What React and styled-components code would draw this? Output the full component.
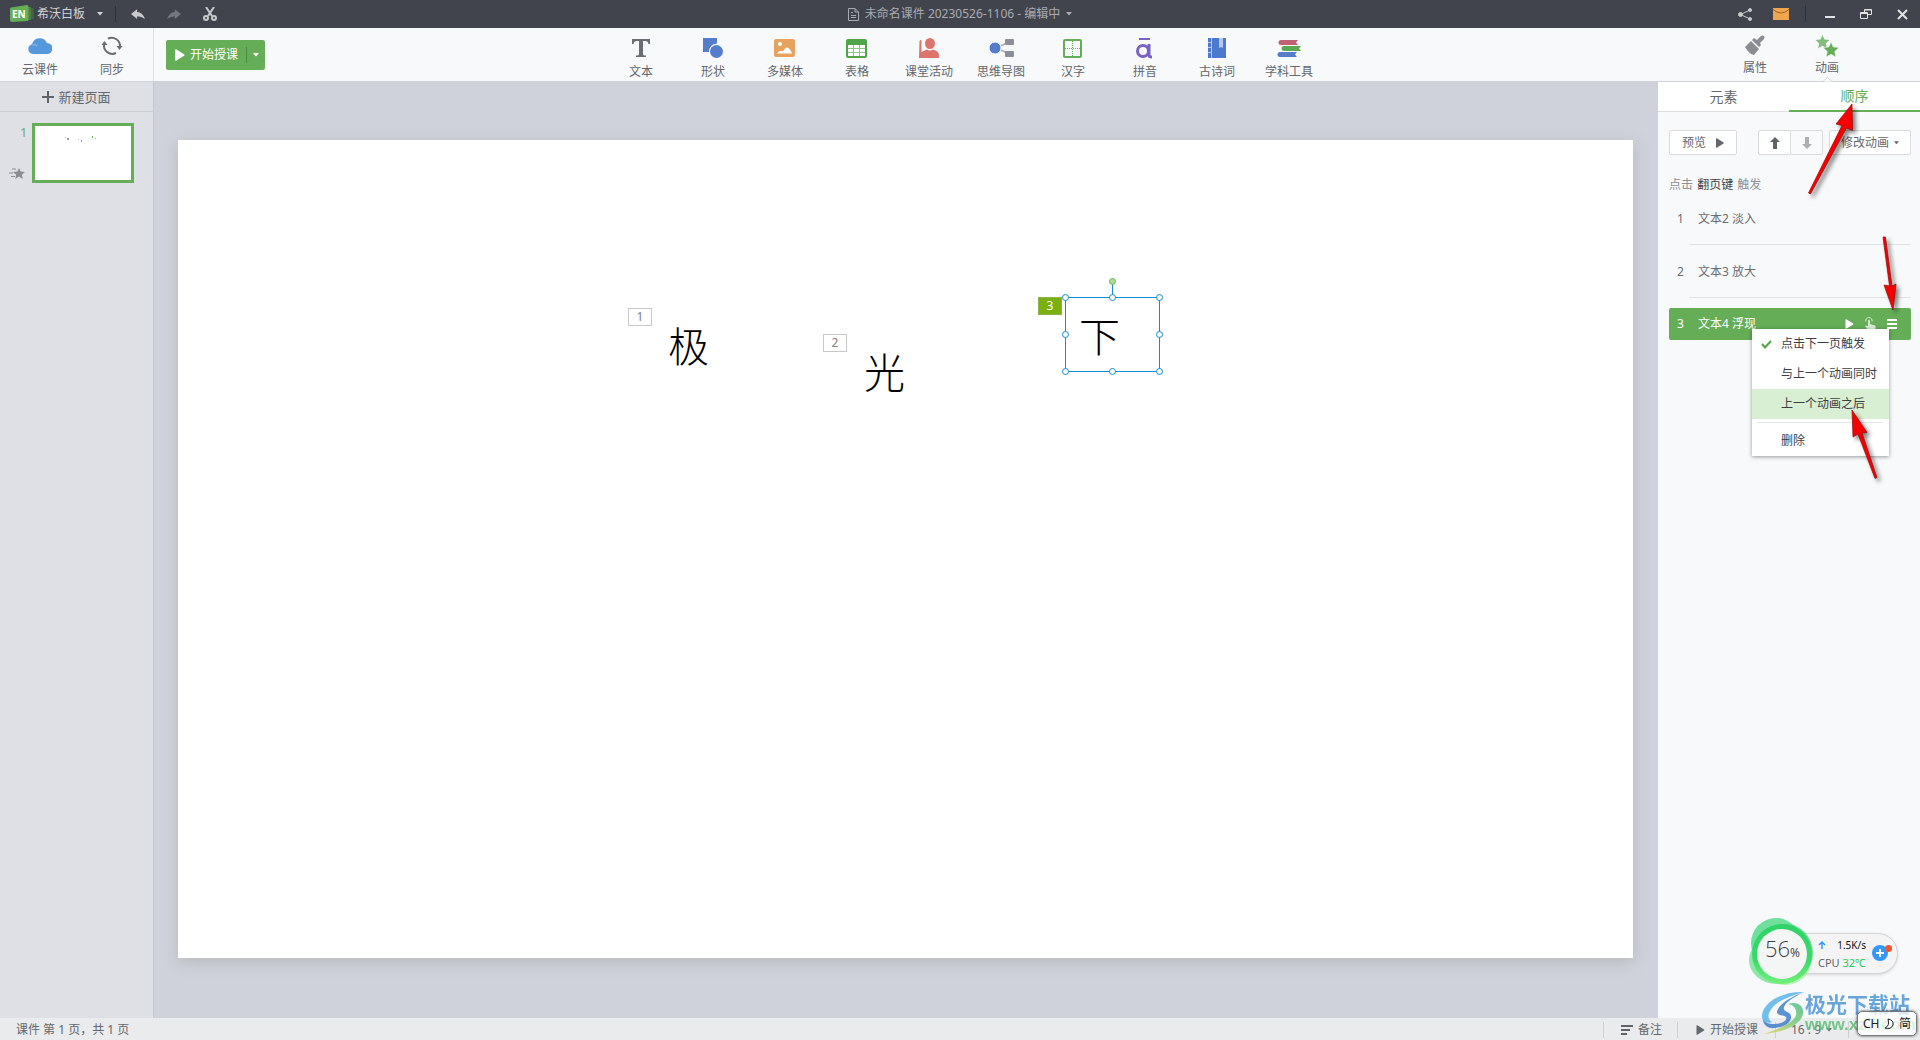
import React from 'react'
import styled, { createGlobalStyle } from 'styled-components';

const GlobalStyle = createGlobalStyle`
  * {
    box-sizing: border-box;
  }
  body {
    margin: 0;
    font-family: "Noto Sans", "Noto Sans CJK SC", sans-serif;
    font-size: 12px;
    line-height: 16px;
    color: #64676b;
  }
  button {
    margin: 0;
    padding: 0;
    border: 0;
    background: none;
    font: inherit;
    color: inherit;
    cursor: pointer;
  }
  svg {
    display: block;
    flex: none;
  }
`;

const Window = styled.div`
  position: relative;
  display: flex;
  flex-direction: column;
  height: 100vh;
  overflow: hidden;
  background: #cfd2db;
`;

//Title bar
const TitleBar = styled.header`
  display: grid;
  grid-template-columns: 1fr auto 1fr;
  align-items: center;
  height: 28px;
  background: #41444d;
  color: #d3d5d9;
`;

const TitleSide = styled.div`
  display: flex;
  align-items: center;
  justify-content: ${props => (props.$end ? 'flex-end' : 'flex-start')};
  padding-left: 10px;
`;

const Brand = styled.button`
  display: flex;
  align-items: center;
  gap: 3px;

  & svg:last-child {
    margin-left: 9px;
  }
`;

const TitleButton = styled.button`
  display: flex;
  align-items: center;
  justify-content: center;
  width: 36px;
  height: 28px;
`;

const DocTitle = styled.button`
  display: flex;
  align-items: center;
  gap: 6px;
  color: #a9abb1;
`;

const TitleRule = styled.span`
  width: 1px;
  height: 16px;
  margin: 0 ${props => props.$after || '6px'} 0 ${props => props.$before || '6px'};
  background: #2e3037;
`;

//Tool bar
const ToolBar = styled.div`
  display: grid;
  grid-template-columns: 1fr auto 1fr;
  height: 54px;
  background: #f7f9fb;
  border-bottom: 1px solid #cfd2d8;
`;

const ToolGroup = styled.div`
  display: flex;
  padding: ${props => props.$pad || '0'};
  justify-content: ${props => (props.$end ? 'flex-end' : 'flex-start')};
`;

const CloudGroup = styled.div`
  display: flex;
  width: 154px;
  padding-left: 4px;
  border-right: 1px solid #dddfe4;
`;

const Tool = styled.button`
  position: relative;
  display: flex;
  flex-direction: column;
  align-items: center;
  gap: ${props => props.$gap || '5px'};
  width: 72px;
  padding-top: ${props => props.$top || '9px'};
  white-space: nowrap;
`;

const TabNotch = styled.svg`
  position: absolute;
  left: 32px;
  bottom: -1px;
`;

const StartGroup = styled.div`
  display: flex;
  align-items: center;
  height: 30px;
  margin: 12px 0 0 12px;
  border-radius: 2px;
  background: #65ad57;
  color: #fff;
`;

const StartButton = styled.button`
  display: flex;
  align-items: center;
  gap: 5px;
  height: 16px;
  padding: 0 8px 0 9px;
  border-right: 1px solid #4b8a40;
`;

const StartMore = styled.button`
  display: flex;
  align-items: center;
  justify-content: center;
  width: 18px;
  height: 30px;
`;

//Main area
const Body = styled.div`
  display: flex;
  flex: 1;
  min-height: 0;
`;

const Sidebar = styled.aside`
  width: 154px;
  background: #dfe0e5;
  border-right: 1px solid #c5c7ce;
`;

const NewPage = styled.button`
  display: flex;
  align-items: center;
  justify-content: center;
  gap: 4px;
  width: 100%;
  height: 30px;
  border-bottom: 1px solid #cdcfd4;
  font-size: 13px;
`;

const SlideRow = styled.div`
  display: flex;
  gap: 5px;
  padding: 11px 0 0 9px;
`;

const SlideMeta = styled.div`
  display: flex;
  flex-direction: column;
  justify-content: space-between;
  width: 18px;
  padding: 2px 0 4px;
  color: #65ad57;

  & span {
    text-align: right;
  }
`;

const Thumb = styled.button`
  width: 102px;
  height: 60px;
  border: 3px solid #65ad57;
  background: #fff;
`;

const Stage = styled.main`
  display: flex;
  flex: 1;
  align-items: center;
  padding: 0 25px 2px 24px;
`;

const Page = styled.div`
  position: relative;
  flex: 1;
  aspect-ratio: 16 / 9;
  background: #fff;
  box-shadow: 0 4px 14px rgba(150, 150, 140, 0.4);
`;

const Badge = styled.span`
  position: absolute;
  left: ${props => props.$x}px;
  top: ${props => props.$y}px;
  width: 24px;
  height: 18px;
  border: 1px solid ${props => (props.$active ? '#8cb04a' : '#c8c8c8')};
  background: ${props => (props.$active ? '#7ab00f' : '#fff')};
  color: ${props => (props.$active ? '#fff' : '#808080')};
  text-align: center;
`;

const Glyph = styled.span`
  position: absolute;
  left: ${props => props.$x}px;
  top: ${props => props.$y}px;
  font-family: "Noto Sans CJK SC", sans-serif;
  font-size: 41px;
  font-weight: 300;
  line-height: 48px;
  color: #000;
`;

const Selection = styled.svg`
  position: absolute;
  left: 882px;
  top: 136px;
`;

//Animation panel
const Panel = styled.aside`
  position: relative;
  width: 262px;
  background: #f7f9fb;
`;

const Tabs = styled.div`
  display: flex;
  height: 30px;
  background: #fff;
  font-size: 14px;
`;

const Tab = styled.button`
  flex: 1;
  border-bottom: ${props => (props.$active ? '2px solid #65ad57' : '1px solid #dcdee1')};
  color: ${props => (props.$active ? '#65ad57' : '#64676b')};
`;

const Controls = styled.div`
  display: flex;
  align-items: center;
  padding: 18px 9px 0 11px;
`;

const OutlineButton = styled.button`
  display: flex;
  align-items: center;
  justify-content: center;
  gap: ${props => props.$gap || '0'};
  width: ${props => props.$w}px;
  height: 25px;
  margin-left: ${props => props.$ml || '0'};
  border: 1px solid #d9dbde;
  border-radius: 2px;
  background: ${props => (props.$dim ? '#f9fafb' : '#fff')};
  white-space: nowrap;
`;

const Trigger = styled.p`
  margin: 22px 0 9px 11px;
  color: #8c8f93;

  & strong {
    margin: 0 1px;
    font-weight: 400;
    color: #3c3e42;
  }
`;

const Steps = styled.ol`
  margin: 0;
  padding: 0 9px 0 11px;
  list-style: none;
`;

const Step = styled.li`
  display: flex;
  align-items: center;
  height: ${props => (props.$active ? '32px' : '33px')};
  padding-left: 8px;
  border-radius: 2px;
  background: ${props => (props.$active ? '#65ad57' : 'transparent')};
  color: ${props => (props.$active ? '#fff' : '#6a6d71')};

  & > span {
    width: 21px;
  }
`;

const StepRule = styled.li`
  height: 1px;
  margin: 9px 0 10px 20px;
  background: #dfe2e5;
`;

const StepTools = styled.div`
  display: flex;
  align-items: center;
  gap: 11px;
  margin-left: auto;
  padding-right: 14px;
`;

const Menu = styled.div`
  position: absolute;
  top: 247px;
  right: 31px;
  width: 137px;
  background: #fff;
  box-shadow: 0 1px 4px rgba(0, 0, 0, 0.4);
  color: #3c3e42;
`;

const MenuItem = styled.button`
  display: flex;
  align-items: center;
  width: 100%;
  height: 30px;
  padding-left: 9px;
  background: ${props => (props.$active ? '#d8efd4' : 'transparent')};
  white-space: nowrap;

  & > i {
    width: 20px;
  }
`;

const MenuRule = styled.hr`
  height: 1px;
  margin: 3px 6px;
  border: 0;
  background: #e4e4ea;
`;

const Arrows = styled.svg`
  position: absolute;
  top: 0;
  right: 0;
  pointer-events: none;
`;

//Status bar
const StatusBar = styled.footer`
  display: flex;
  align-items: center;
  justify-content: space-between;
  height: 22px;
  padding: 2px 71px 0 16px;
  background: #e9ebed;
`;

const StatusTools = styled.div`
  display: flex;
  align-items: center;
  border-right: 1px solid #cdcfd3;
`;

const StatusButton = styled.button`
  display: flex;
  align-items: center;
  gap: 5px;
  width: ${props => props.$w}px;
  padding-left: ${props => props.$pl || '17px'};
  border-left: 1px solid #cdcfd3;
  white-space: nowrap;
`;

//Floating widgets
const Monitor = styled.div`
  position: absolute;
  right: 22px;
  bottom: 66px;
  display: flex;
  align-items: center;
  justify-content: space-between;
  width: 116px;
  height: 41px;
  padding: 0 6px 0 35px;
  border: 1px solid #d4d5d7;
  border-radius: 21px;
  background: #f4f4f5;
  box-shadow: 0 1px 3px rgba(0, 0, 0, 0.15);
  font-family: "Noto Sans", sans-serif;
  font-size: 11px;
  white-space: nowrap;
`;

const Readings = styled.div`
  display: flex;
  flex-direction: column;
  gap: 2px;
  width: 48px;
`;

const Reading = styled.div`
  display: flex;
  justify-content: space-between;
  color: ${props => props.$color || '#64676b'};
  font-size: ${props => props.$size || '11px'};

  & b {
    font-weight: 400;
    color: #1fce5c;
  }
`;

const Ring = styled.svg`
  position: absolute;
  right: 106px;
  bottom: 54px;
`;

const RingText = styled.span`
  position: absolute;
  right: 120px;
  bottom: 74px;
  display: flex;
  align-items: baseline;
  font-family: "Open Sans", sans-serif;
  font-size: 22px;
  font-weight: 300;
  line-height: 26px;
  color: #3c3e42;

  & small {
    font-size: 12px;
    font-weight: 400;
  }
`;

const Watermark = styled.div`
  position: absolute;
  right: 9px;
  bottom: 5px;
  display: flex;
  opacity: 0.85;
`;

const WatermarkText = styled.div`
  display: flex;
  flex-direction: column;
  width: 106px;
  font-family: "Noto Sans CJK SC", sans-serif;
  font-size: 21px;
  font-weight: 700;
  line-height: 24px;
  color: #4f97d6;
  white-space: nowrap;

  & small {
    font-family: "Liberation Sans", sans-serif;
    font-size: 17px;
    line-height: 20px;
    color: #5fbf77;
  }
`;

const Ime = styled.div`
  position: absolute;
  right: 3px;
  bottom: 4px;
  display: flex;
  align-items: center;
  justify-content: space-between;
  width: 60px;
  height: 25px;
  padding: 0 5px;
  border: 1px solid #777;
  border-radius: 5px;
  background: rgba(255, 255, 255, 0.75);
  box-shadow: 0 0 3px rgba(0, 0, 0, 0.7);
  color: #222;
`;

const Caret = ({ size = 6 }) => (
    <svg width={size} height="4" viewBox="0 0 6 4" fill="currentColor"><path d="M0 0h6L3 3.5z" /></svg>
)

const Play = ({ w = 8, h = 10 }) => (
    <svg width={w} height={h} viewBox="0 0 8 10" fill="currentColor"><path d="M0 0.6Q0 0 .8 .3L7.6 4.6Q8 5 7.6 5.4L.8 9.8Q0 10 0 9.4z" /></svg>
)

const TOOLS = [
    { label: '文本', icon: <path d="M2 2h18v5h-1.500q-.5-3-3-3H13v13q0 1.500 3 1.500V20H6v-1.500q3 0 3-1.500V4H6.500q-2.500 0-3 3H2z" fill="#6a6d73" /> },
    {
        label: '形状', icon: <>
            <path d="M1 1h14v5.500A8 8 0 0 0 7 15H1z" fill="#567dcc" />
            <circle cx="14.500" cy="14.500" r="6.500" fill="#567dcc" />
        </>
    },
    {
        label: '多媒体', icon: <>
            <rect y="2" width="21" height="18" rx="2" fill="#e6a25e" />
            <circle cx="6" cy="7" r="2" fill="#fff" />
            <path d="M3 16.500q3-4 6-2 3-6 6-3 2 2 3 5z" fill="#fff" />
        </>
    },
    {
        label: '表格', icon: <>
            <rect y="2" width="21" height="19" rx="2" fill="#4fa548" />
            <path d="M2 8h17v11H2z" fill="#fff" />
            <path d="M2 11.500h17M2 15.500h17M7.500 8v11M13.500 8v11" stroke="#8dc588" />
        </>
    },
    {
        label: '课堂活动', icon: <>
            <ellipse cx="12" cy="6.500" rx="5" ry="5.500" fill="#dc756d" />
            <path d="M1.500 4q1.500-2 2 0v11l5.500-2.500q3 2 6 0 6 1.500 6 5.500v3H1z" fill="#dc756d" />
        </>
    },
    {
        label: '思维导图', icon: <>
            <path d="M6 11L20 4.500M6 11l14 6" stroke="#a9adb3" strokeWidth="1.500" />
            <circle cx="5" cy="11" r="6" fill="#567dcc" stroke="#f7f9fb" />
            <rect x="15" y="2" width="9" height="6" rx="1" fill="#8b8f98" />
            <rect x="15" y="14" width="9" height="6" rx="1" fill="#8b8f98" />
        </>
    },
    {
        label: '汉字', icon: <>
            <rect x="2" y="3" width="17" height="17" rx="1" fill="none" stroke="#65ad57" strokeWidth="2" />
            <path d="M10.500 4v15M3 11.500h15" stroke="#65ad57" strokeDasharray="1 1" />
        </>
    },
    {
        label: '拼音', icon: <>
            <path d="M5 2h11" stroke="#7a62c4" strokeWidth="2" />
            <ellipse cx="9" cy="14" rx="5.500" ry="5.500" fill="none" stroke="#7a62c4" strokeWidth="3" />
            <path d="M15 7v11q0 2 3 2" fill="none" stroke="#7a62c4" strokeWidth="3" />
        </>
    },
    {
        label: '古诗词', icon: <>
            <path d="M2 1h18v20H2z" fill="#4c78cd" />
            <path d="M5.500 1v20M2 5.500h3M2 10.500h3M2 15.500h3" stroke="#b5c8ee" />
            <path d="M13 1h4v10l-2-1-2 1z" fill="#b5c8ee" />
        </>
    },
    {
        label: '学科工具', icon: <>
            <path d="M3 3h17l-2 2.500 2 2.500H3a2.500 2.500 0 0 1 0-5z" fill="#bf6272" />
            <path d="M6 9h17l-2 2.500 2 2.500H6a2.500 2.500 0 0 1 0-5z" fill="#5aa854" />
            <path d="M2 15h17l-2 2.500 2 2.500H2a2.500 2.500 0 0 1 0-5z" fill="#567dcc" />
        </>
    },
]

function Header() {
    return (
        <TitleBar>
            <TitleSide>
                <Brand>
                    <svg width="24" height="18" viewBox="0 0 24 18">
                        <path d="M18 2h3v13h-3" fill="#4c7d47" />
                        <path d="M21 3h2.500v11H21" fill="#48634a" />
                        <path d="M1 2.500L17 0q1.500 0 1.500 1.500v13q0 1.500-1.500 1.500l-15 1Q0 17 0 15V4q0-1.500 1-1.500z" fill="#65ad57" />
                        <text x="2" y="13" fontSize="10" fontWeight="700" fontFamily="Noto Sans" fill="#fff">EN</text>
                    </svg>
                    希沃白板
                    <Caret />
                </Brand>
                <TitleRule $before="12px" $after="4px" />
                <TitleButton aria-label="撤销">
                    <svg width="14" height="11" viewBox="0 0 16 12" fill="#c9cacd"><path d="M7 0v3q6 0 9 8-4-3-9-3v3L0 5.500z" /></svg>
                </TitleButton>
                <TitleButton aria-label="重做">
                    <svg width="14" height="11" viewBox="0 0 16 12" fill="#75777e"><path d="M9 0v3Q3 3 0 11q4-3 9-3v3l7-5.500z" /></svg>
                </TitleButton>
                <TitleButton aria-label="剪切">
                    <svg width="14" height="14" viewBox="0 0 14 14" fill="none" stroke="#c9cacd" strokeWidth="2">
                        <path d="M3 0l6 9M11 0L5 9" /><circle cx="3" cy="11" r="2" /><circle cx="11" cy="11" r="2" />
                    </svg>
                </TitleButton>
            </TitleSide>
            <DocTitle>
                <svg width="11" height="13" viewBox="0 0 11 13" fill="none" stroke="#a9abb1"><path d="M.5.5h6.500l3.500 3.500v8.500H.5zM7 .5V4h3.500M3 4.500h2M3 7.500h5M3 9.500h5" /></svg>
                未命名课件 20230526-1106 - 编辑中
                <Caret />
            </DocTitle>
            <TitleSide $end>
                <TitleButton aria-label="分享">
                    <svg width="14" height="13" viewBox="0 0 14 13" fill="#c9cacd" stroke="#c9cacd">
                        <path d="M2.500 6.500L12 2M2.500 6.500L12 11" /><circle cx="2.500" cy="6.500" r="2" /><circle cx="12" cy="2" r="1.500" /><circle cx="12" cy="11" r="1.500" />
                    </svg>
                </TitleButton>
                <TitleButton aria-label="消息">
                    <svg width="16" height="12" viewBox="0 0 16 12"><path d="M0 0h16v12H0z" fill="#f0a54f" /><path d="M0 1.500q8 7 16 0" fill="none" stroke="#9a6430" /></svg>
                </TitleButton>
                <TitleRule />
                <TitleButton aria-label="最小化">
                    <svg width="10" height="12" viewBox="0 0 10 12"><path d="M0 9h10" stroke="#e2e3e5" strokeWidth="2" /></svg>
                </TitleButton>
                <TitleButton aria-label="还原">
                    <svg width="12" height="10" viewBox="0 0 12 10" fill="none" stroke="#e2e3e5"><path d="M4.500 4V.5h7v5H8M4.500 1h7" /><path d="M.5 3.500h7v6h-7zM.5 4.500h7" /></svg>
                </TitleButton>
                <TitleButton aria-label="关闭">
                    <svg width="11" height="11" viewBox="0 0 11 11" stroke="#e2e3e5" strokeWidth="2"><path d="M1 1l9 9M10 1l-9 9" /></svg>
                </TitleButton>
            </TitleSide>
        </TitleBar>
    )
}

function Tools() {
    return (
        <ToolBar>
            <ToolGroup>
                <CloudGroup>
                    <Tool $top="5px">
                        <svg width="24" height="24" viewBox="0 0 24 24"><path d="M5 21a5 5 0 0 1-1-9.800A8 8 0 0 1 19 10a5.500 5.500 0 0 1 0 11z" fill="#5599dc" /><path d="M4.500 12q3-1 4.500 1" fill="none" stroke="#9cc4ec" /></svg>
                        云课件
                    </Tool>
                    <Tool $top="5px">
                        <svg width="24" height="24" viewBox="0 0 24 24" fill="none" stroke="#6a6d73" strokeWidth="2">
                            <path d="M8 5.500A8.500 8.500 0 0 1 20 14M16 20A8.500 8.500 0 0 1 4 11" />
                            <path d="M16.500 13h6L19.500 17zM1.500 12h6l-3-4z" fill="#6a6d73" stroke="none" />
                        </svg>
                        同步
                    </Tool>
                </CloudGroup>
                <StartGroup>
                    <StartButton><Play w={10} h={12} />开始授课</StartButton>
                    <StartMore aria-label="更多授课方式"><Caret /></StartMore>
                </StartGroup>
            </ToolGroup>
            <ToolGroup $pad="0 0 0 10px">
                {TOOLS.map(tool => (
                    <Tool key={tool.label}>
                        <svg width="22" height="22" viewBox="0 0 22 22" overflow="visible">{tool.icon}</svg>
                        {tool.label}
                    </Tool>
                ))}
            </ToolGroup>
            <ToolGroup $end $pad="0 57px 0 0">
                <Tool $top="6px" $gap="2px">
                    <svg width="24" height="24" viewBox="-1 -1 24 24" fill="#898c91"><path d="M13 5l4-4q2-1 3 0t0 3l-4 4 1 2-2 2-7-7 2-2z" /><path d="M7 6l8 8-5 6Q5 19 1 12z" /></svg>
                    属性
                </Tool>
                <Tool $top="6px" $gap="2px">
                    <svg width="24" height="24" viewBox="0 0 24 24">
                        <path d="M7.500 1l2 4.500 5 .5-3.700 3.300 1 5L7.500 11.800 3.200 14.300l1-5L.5 6l5-.5z" fill="#84bd79" />
                        <path d="M16 8l2.200 5 5.800.6-4.300 3.900 1.200 5.500-4.900-2.800-4.900 2.800 1.200-5.500L8 13.600l5.800-.6z" fill="#65ad57" stroke="#f7f9fb" strokeWidth=".5" />
                    </svg>
                    动画
                    <TabNotch width="9" height="5" viewBox="0 0 9 5"><path d="M0 4.500L4.500.5 9 4.500" fill="#fff" stroke="#cfd2d8" /></TabNotch>
                </Tool>
            </ToolGroup>
        </ToolBar>
    )
}

function Slides() {
    return (
        <Sidebar>
            <NewPage>
                <svg width="12" height="12" viewBox="0 0 12 12" stroke="#5f6266" strokeWidth="2"><path d="M6 0v12M0 6h12" /></svg>
                新建页面
            </NewPage>
            <SlideRow>
                <SlideMeta>
                    <span>1</span>
                    <svg width="16" height="11" viewBox="0 0 16 11"><path d="M10 0l1.600 3.600 4.400.4-3.200 2.700 1 4.300L10 8.600 6.200 11l1-4.300L4 4l4.400-.4z" fill="#898c91" /><path d="M3 1h4M0 5h4M2 8.500h4" stroke="#898c91" /></svg>
                </SlideMeta>
                <Thumb aria-label="第 1 页">
                    <svg width="96" height="54" viewBox="0 0 96 54">
                        <path d="M30 11h1v1h-1zM43 13h1v1h-1zM60 12h1v1h-1z" fill="#bbb" />
                        <path d="M32 12h2v2h-2zM46 14h1v2h-1z" fill="#999" />
                        <path d="M57 10h1v2h-1z" fill="#65ad57" />
                    </svg>
                </Thumb>
            </SlideRow>
        </Sidebar>
    )
}

function Canvas() {
    const handles = [[5, 21], [52, 21], [99, 21], [5, 58], [99, 58], [5, 95], [52, 95], [99, 95]]
    return (
        <Stage>
            <Page>
                <Badge $x={450} $y={168}>1</Badge>
                <Glyph $x={490} $y={180}>极</Glyph>
                <Badge $x={645} $y={194}>2</Badge>
                <Glyph $x={686} $y={206}>光</Glyph>
                <Badge $x={860} $y={157} $active>3</Badge>
                <Glyph $x={901} $y={170}>下</Glyph>
                <Selection width="106" height="100" viewBox="0 0 106 100" fill="#fff" stroke="#128ccc">
                    <path d="M5.500 21.500h94v74h-94zM52.500 21V6" fill="none" />
                    {handles.map(([x, y]) => <circle key={x + '-' + y} cx={x + 0.5} cy={y + 0.5} r="3" />)}
                    <circle cx="52.500" cy="5.500" r="3" fill="#a9dc95" stroke="#6cb94f" />
                </Selection>
            </Page>
        </Stage>
    )
}

function AnimationPanel() {
    return (
        <Panel>
            <Tabs>
                <Tab>元素</Tab>
                <Tab $active>顺序</Tab>
            </Tabs>
            <Controls>
                <OutlineButton $w={68} $gap="10px">预览<Play /></OutlineButton>
                <OutlineButton $w={33} $ml="21px" aria-label="上移">
                    <svg width="10" height="12" viewBox="0 0 10 12" fill="#5f6266"><path d="M5 0l5 5H7v7H3V5H0z" /></svg>
                </OutlineButton>
                <OutlineButton $w={33} $ml="-1px" $dim aria-label="下移">
                    <svg width="10" height="12" viewBox="0 0 10 12" fill="#adafb2"><path d="M5 12l5-5H7V0H3v7H0z" /></svg>
                </OutlineButton>
                <OutlineButton $w={82} $ml="auto" $gap="5px">修改动画<Caret size={5} /></OutlineButton>
            </Controls>
            <Trigger>点击 <strong>翻页键</strong> 触发</Trigger>
            <Steps>
                <Step><span>1</span>文本2 淡入</Step>
                <StepRule />
                <Step><span>2</span>文本3 放大</Step>
                <StepRule />
                <Step $active>
                    <span>3</span>文本4 浮现
                    <StepTools>
                        <button aria-label="播放"><Play w={9} h={10} /></button>
                        <button aria-label="触发方式">
                            <svg width="11" height="14" viewBox="0 0 11 14" fill="#d9ecd6"><path d="M3 3.500q1-1 2 0V7l5 1.500q1 .5.500 2L10 14H4L0 9q1-1 3 .5z" /><path d="M.8 4.500A3.200 3.200 0 1 1 7 4.500" fill="none" stroke="#d9ecd6" /></svg>
                        </button>
                        <button aria-label="菜单">
                            <svg width="10" height="10" viewBox="0 0 10 10" stroke="#fff" strokeWidth="2"><path d="M0 1h10M0 5h10M0 9h10" /></svg>
                        </button>
                    </StepTools>
                </Step>
            </Steps>
            <Menu>
                <MenuItem><i><svg width="11" height="9" viewBox="0 0 11 9" fill="none" stroke="#4fa548" strokeWidth="2"><path d="M1 4l3 3.500L10 1" /></svg></i>点击下一页触发</MenuItem>
                <MenuItem><i />与上一个动画同时</MenuItem>
                <MenuItem $active><i />上一个动画之后</MenuItem>
                <MenuRule />
                <MenuItem><i />删除</MenuItem>
            </Menu>
            <Arrows width="140" height="420" viewBox="1780 82 140 420">
                <g fill="#f80000" stroke="#8f0a0a" strokeWidth=".7" style={{ filter: 'drop-shadow(3px 3px 2px rgba(0,0,0,.5))' }}>
                    <path d="M1852 104l-16 20 6 1.500L1808.500 193l2 1L1846.500 128l6 2.500z" />
                    <path d="M1893 310l-9-25 5.500 1L1883 237h2.500L1892 286l4-2z" />
                    <path d="M1852 410l1 27 5-3 17 44.500 2-1L1862 433l5-.5z" />
                </g>
            </Arrows>
        </Panel>
    )
}

function Status() {
    return (
        <StatusBar>
            <span>课件 第 1 页，共 1 页</span>
            <StatusTools>
                <StatusButton $w={74}>
                    <svg width="12" height="10" viewBox="0 0 12 10" stroke="#5f6266" strokeWidth="2"><path d="M0 1h12M0 5h9M0 9h6" /></svg>
                    备注
                </StatusButton>
                <StatusButton $w={98} $pl="18px"><Play w={9} h={10} />开始授课</StatusButton>
                <StatusButton $w={73} $pl="15px">16 : 9<Caret /></StatusButton>
            </StatusTools>
        </StatusBar>
    )
}

function Widgets() {
    return (
        <>
            <Monitor>
                <Readings>
                    <Reading $color="#111" $size="10px">
                        <svg width="8" height="14" viewBox="0 0 8 14" fill="none" stroke="#3296fa" strokeWidth="1.500"><path d="M4 12V5M1 8l3-3 3 3" /></svg>
                        1.5K/s
                    </Reading>
                    <Reading>CPU <b>32℃</b></Reading>
                </Readings>
                <svg width="20" height="20" viewBox="0 0 20 20" overflow="visible"><circle cx="9" cy="9" r="8" fill="#3296fa" /><path d="M9 5v8M5 9h8" stroke="#fff" strokeWidth="2" /><circle cx="17.500" cy="4.500" r="3.500" fill="#f5532d" /></svg>
            </Monitor>
            <Ring width="66" height="70" viewBox="0 0 66 70">
                <defs>
                    <linearGradient id="ring" x1="0" y1="0" x2="0" y2="1">
                        <stop offset="0" stopColor="#2fd268" />
                        <stop offset=".6" stopColor="#3cd96c" />
                        <stop offset="1" stopColor="#72f07a" />
                    </linearGradient>
                </defs>
                <ellipse cx="28" cy="27" rx="25" ry="25" fill="#42d77c" opacity=".75" />
                <ellipse cx="38" cy="37" rx="27" ry="29" fill="#45d67a" opacity=".75" />
                <ellipse cx="29" cy="44" rx="28" ry="24" fill="#6be08a" opacity=".75" />
                <ellipse cx="37" cy="45" rx="26" ry="24" fill="#8bf08c" opacity=".6" />
                <circle cx="34" cy="38" r="30" fill="url(#ring)" />
                <circle cx="34" cy="38" r="25" fill="#f4f5f5" />
            </Ring>
            <RingText>56<small>%</small></RingText>
            <Watermark>
                <svg width="45" height="44" viewBox="0 0 45 44">
                    <defs>
                        <linearGradient id="leaf" x1="0" y1="1" x2="1" y2="0">
                            <stop offset="0" stopColor="#e3d55c" />
                            <stop offset=".6" stopColor="#7cc97d" />
                            <stop offset="1" stopColor="#4fbd8b" />
                        </linearGradient>
                    </defs>
                    <path d="M44 1C24 0 4 10 2 24c-1 7 6 9 10 7-6-3-4-11 4-18C24 7 34 4 44 1z" fill="#5cb5ea" />
                    <path d="M44 1C30 6 18 14 17 21c0 4 7 3 9 5 2 3-4 7-12 7-5 0-9-1-11-5 0 6 5 10 12 9 10-1 17-6 16-12-1-5-9-4-7-9C26 10 36 5 44 1z" fill="#4180cc" />
                    <path d="M28 13c10-3 16 2 15 10C41 34 24 41 4 43c14-5 30-11 32-19 1-6-2-10-8-11z" fill="url(#leaf)" />
                </svg>
                <WatermarkText>极光下载站<small>www.xz7.com</small></WatermarkText>
            </Watermark>
            <Ime>
                <span>CH</span>
                <svg width="12" height="12" viewBox="0 0 12 12" fill="none" stroke="#222"><path d="M5 1q6 1 5 6-2 5-8 3 5-2 3-9z" /></svg>
                <span>简</span>
            </Ime>
        </>
    )
}

function App() {
    return (
        <Window>
            <GlobalStyle />
            <Header />
            <Tools />
            <Body>
                <Slides />
                <Canvas />
                <AnimationPanel />
            </Body>
            <Status />
            <Widgets />
        </Window>
    )
}

export default App;
